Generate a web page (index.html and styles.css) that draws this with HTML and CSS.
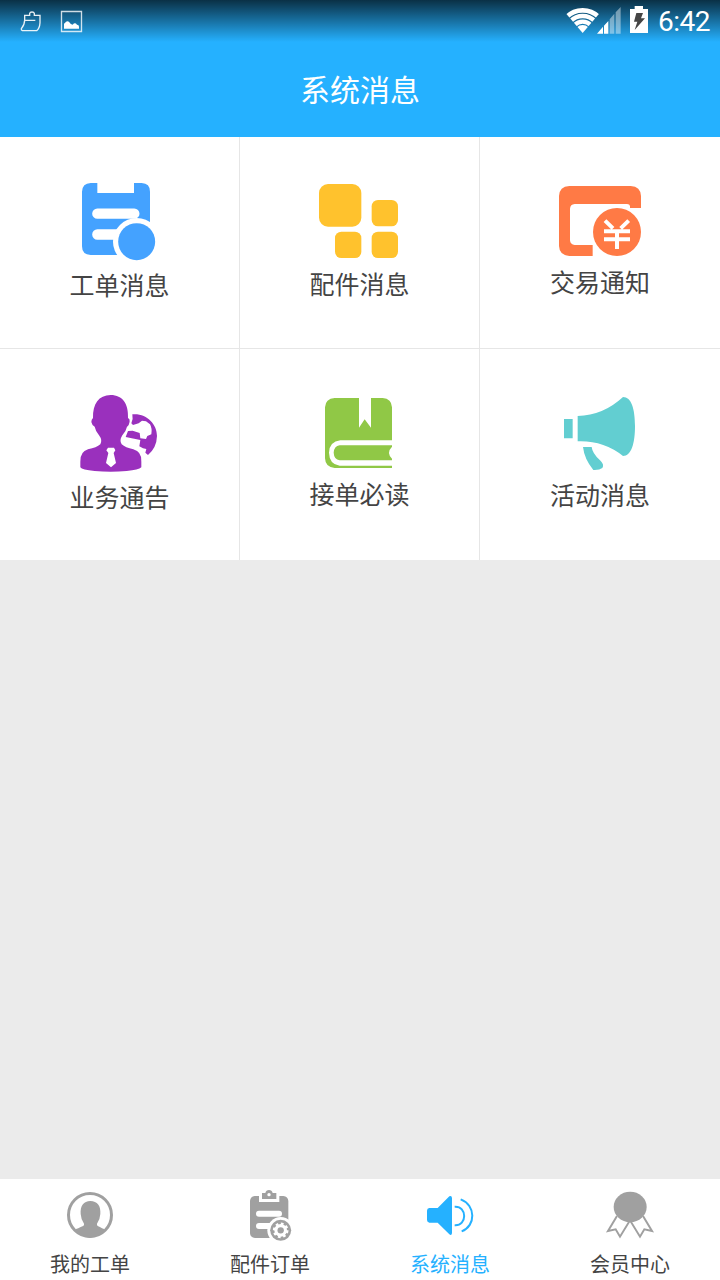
FILE: index.html
```html
<!DOCTYPE html>
<html lang="zh-CN">
<head>
<meta charset="utf-8">
<title>系统消息</title>
<link rel="stylesheet" href="styles.css">
</head>
<body>
<div class="app">
  <header class="header">
    <div class="status">
      <svg class="status-left" viewBox="0 0 270 120" fill="none" stroke="#fff">
        <path d="M74 46H89V40Q90 36 96 36Q102 36 103 40V46H120V68Q119 85 110 92H67Q63 91 64 86Q74 74 74 60ZM74 61H106" stroke-width="4" stroke-opacity=".9"/>
        <path d="M184.500 34.500H244.500V94.500H184.500Z" stroke-width="4" stroke-opacity=".8"/>
        <path d="M192 86V71Q196 68 198 65Q204 62 208 67Q212 74 218 74Q225 66 231 74Q237 74 237 80V86Z" fill="#fff" stroke="none"/>
      </svg>
      <svg class="status-right" viewBox="72 0 264 120">
        <clipPath id="fan"><path d="M128 99L76 38Q128 -1 180 38Z"/></clipPath>
        <g clip-path="url(#fan)" fill="none" stroke="#fff">
          <circle cx="128" cy="99" r="68" stroke-width="14"/>
          <circle cx="128" cy="99" r="51" stroke-width="13"/>
          <circle cx="128" cy="99" r="34" stroke-width="13"/>
          <circle cx="128" cy="99" r="12" stroke-width="24"/>
        </g>
        <path d="M171 101L189 80V101ZM192 77L205 63V101H192Z" fill="#fff"/>
        <path d="M209 58L223 41V101H209ZM227 37L242 21V101H227Z" fill="#fff" fill-opacity=".43"/>
        <path d="M270 27H284V18H309V27H324V99H270Z" fill="#fff"/>
        <path d="M289 39H309L303 55H315L284 90L292 65H282Z" fill="#454545"/>
      </svg>
      <span class="clock">6:42</span>
    </div>
    <h1 class="title">系统消息</h1>
  </header>

  <main class="grid">
    <section class="cell">
      <svg class="icon h78" viewBox="27 39 303 234">
        <path d="M92 39H112V69H222V39H245Q270 40 270 65V255H92Q66 254 66 229V65Q67 40 92 39Z" fill="#44a2ff"/>
        <path d="M112 131H223M112 193.500H190" stroke="#fff" stroke-width="31" stroke-linecap="round"/>
        <circle cx="230" cy="215" r="71" fill="#fff"/>
        <path d="M271 255h40v-110h-40z" fill="#fff"/>
        <circle cx="230" cy="215" r="55.500" fill="#44a2ff"/>
      </svg>
      <span class="label">工单消息</span>
    </section>
    <section class="cell">
      <svg class="icon h76" viewBox="27 42 303 228" fill="#ffc22d">
        <rect x="57" y="42" width="127" height="128" rx="27"/>
        <rect x="215" y="90" width="79" height="79" rx="19"/>
        <rect x="105" y="185" width="79" height="79" rx="19"/>
        <rect x="215" y="185" width="79" height="79" rx="19"/>
      </svg>
      <span class="label">配件消息</span>
    </section>
    <section class="cell">
      <svg class="icon h72" viewBox="30 48 300 216">
        <path d="M88 48H272Q302 50 303 78V114H270V108Q269 102 261 102H104Q91 103 90 116V211Q91 224 104 225H158V258H88Q58 256 57 228V78Q58 50 88 48Z" fill="#ff7a45"/>
        <circle cx="231" cy="186" r="72" fill="#ff7a45"/>
        <path d="M195 152L219 175M266 152L242 175M192 184H270M192 208H270M231 180V237" fill="none" stroke="#fff" stroke-width="12"/>
      </svg>
      <span class="label">交易通知</span>
    </section>
    <section class="cell">
      <svg class="icon h78" viewBox="27 45 303 234">
        <path d="M152 45C188 45 206 72 204 114Q210 117 209 124Q207 138 201 140Q198 154 187 166Q177 182 185 193Q196 203 220 208Q246 215 244 245V262Q236 270 200 273Q152 278 104 273Q66 270 61 262V245Q60 215 84 208Q110 203 121 193Q128 180 117 166Q107 154 104 140Q96 136 94 126Q94 118 99 114C98 72 116 45 152 45Z" fill="#9a30bd"/>
        <path d="M144 203H162L166 211L161 219L168 249L153 262L138 249L145 219L139 211Z" fill="#fff"/>
        <path d="M217 103C260 99 291 132 291 168Q290 203 264 225L256 218L259 207L249 205L238 199L241 180L197 171L204 153L218 152L239 159L241 175L258 177L262 168L274 163Q277 145 270 133L258 124L246 122L236 130L219 135L214 130Q220 116 217 103Z" fill="#9a30bd"/>
      </svg>
      <span class="label">业务通告</span>
    </section>
    <section class="cell">
      <svg class="icon h72" viewBox="27 54 303 216">
        <path d="M104 54H177V143L194 118L213 143V54H248Q275 56 276 82V181H121Q88 185 87 218Q88 253 119 257H276V264H104Q76 262 75 235V82Q76 56 104 54Z" fill="#90c846"/>
        <path d="M119 196H276V200Q258 218 276 236V241H119Q102 238 101 218Q102 199 119 196Z" fill="#90c846"/>
      </svg>
      <span class="label">接单必读</span>
    </section>
    <section class="cell">
      <svg class="icon h74" viewBox="30 51 300 222" fill="#62ced1">
        <path d="M72 117H98V175H72ZM113 108Q190 106 249 51C274 51 285 86 285 138C285 190 274 228 249 228Q190 181 113 184Z"/>
        <path d="M129 201H155Q157 220 180 241Q194 254 187 264Q178 271 160 270Q133 237 129 201Z"/>
      </svg>
      <span class="label">活动消息</span>
    </section>
  </main>

  <nav class="tabs">
    <a class="tab">
      <svg class="tab-icon" viewBox="90 54 180 162">
        <circle cx="180" cy="135" r="64.500" fill="none" stroke="#a0a0a0" stroke-width="9"/>
        <path d="M181 93C202 93 213 108 211 132Q210 149 201 161V166Q207 171 224 178Q207 203 180 203Q154 203 136 178Q155 171 162 166V161Q153 149 152 132C150 108 161 93 181 93Z" fill="#a0a0a0"/>
      </svg>
      <span>我的工单</span>
    </a>
    <a class="tab">
      <svg class="tab-icon" viewBox="630 54 180 162">
        <path d="M674 78H687V96H748V78H760Q774 80 775 93V204H675Q661 203 660 190V93Q661 80 674 78Z" fill="#a0a0a0"/>
        <path d="M696 69H706Q708 60 717 60Q726 60 728 69H739V87H696Z" fill="#a0a0a0"/>
        <circle cx="717" cy="74" r="5" fill="#fff"/>
        <path d="M687 131.500H747M687 168H720" stroke="#fff" stroke-width="18" stroke-linecap="round"/>
        <circle cx="752" cy="181" r="40" fill="#fff"/>
        <circle cx="752" cy="181" r="31.500" fill="#a0a0a0"/>
        <circle cx="752" cy="181" r="19" fill="#fff"/>
        <circle cx="752" cy="181" r="20" fill="none" stroke="#fff" stroke-width="7" stroke-dasharray="8 7.700"/>
        <circle cx="752" cy="181" r="9.500" fill="#a0a0a0"/>
      </svg>
      <span>配件订单</span>
    </a>
    <a class="tab active">
      <svg class="tab-icon" viewBox="90 54 180 162">
        <path d="M118 114H143L178 79Q185 75 186 84V189Q185 198 178 193L143 158H118Q111 157 111 150V122Q111 115 118 114Z" fill="#25b1ff"/>
        <path d="M194 110C232 107 232 169 194 166M212 88C258 105 258 168 215 184" fill="none" stroke="#25b1ff" stroke-width="6"/>
      </svg>
      <span>系统消息</span>
    </a>
    <a class="tab">
      <svg class="tab-icon" viewBox="630 54 180 162">
        <path d="M681 138L654 183L677 178L690 200L720 151L750 200L763 178L786 183L759 138" fill="none" stroke="#a0a0a0" stroke-width="6"/>
        <ellipse cx="720.500" cy="111" rx="49.500" ry="45.500" fill="#a0a0a0"/>
      </svg>
      <span>会员中心</span>
    </a>
  </nav>
</div>
</body>
</html>
```

FILE: styles.css
```css
* {
  box-sizing: border-box;
}

body {
  margin: 0;
  font-family: Roboto, "Noto Sans CJK SC", sans-serif;
  color: #444;
}

.app {
  width: 720px;
  height: 1280px;
  display: flex;
  flex-direction: column;
  background: #ebebeb;
  overflow: hidden;
}

.header {
  height: 137px;
  flex: none;
  color: #fff;
  background: linear-gradient(rgba(0, 0, 0, .73), rgba(0, 0, 0, 0) 42px), #25b1ff;
}

.status {
  height: 42px;
  display: flex;
}

.status-left {
  width: 90px;
  height: 40px;
  margin-right: auto;
}

.status-right {
  width: 88px;
  height: 40px;
}

.clock {
  width: 68px;
  padding-right: 10px;
  text-align: right;
  white-space: nowrap;
  font-size: 28px;
  line-height: 43px;
  letter-spacing: -0.5px;
}

.title {
  margin: 0;
  font-size: 30px;
  line-height: 98px;
  font-weight: 400;
  text-align: center;
}

.grid {
  display: grid;
  grid-template-columns: repeat(3, 240px);
  grid-template-rows: 212px 211px;
  background: #fff;
}

.cell {
  display: flex;
  flex-direction: column;
  align-items: center;
  justify-content: center;
  gap: 11px;
  border-right: 1px solid #e6e6e6;
}

.cell:nth-child(3n) {
  border-right: 0;
}

.cell:nth-child(-n+3) {
  border-bottom: 1px solid #e6e6e6;
}

.icon {
  width: 101px;
  flex: none;
}

.cell:nth-child(3n) .icon {
  width: 100px;
}

.h78 { height: 78px; }
.h76 { height: 76px; }
.h74 { height: 74px; }
.h72 { height: 72px; }

.label {
  font-size: 25px;
  line-height: 30px;
}

.tabs {
  height: 101px;
  margin-top: auto;
  display: flex;
  background: #fff;
}

.tab {
  flex: 1;
  padding-top: 9px;
  display: flex;
  flex-direction: column;
  align-items: center;
  gap: 8px;
  font-size: 20px;
  line-height: 30px;
}

.tab-icon {
  width: 60px;
  height: 54px;
}

.active {
  color: #25b1ff;
}
```
